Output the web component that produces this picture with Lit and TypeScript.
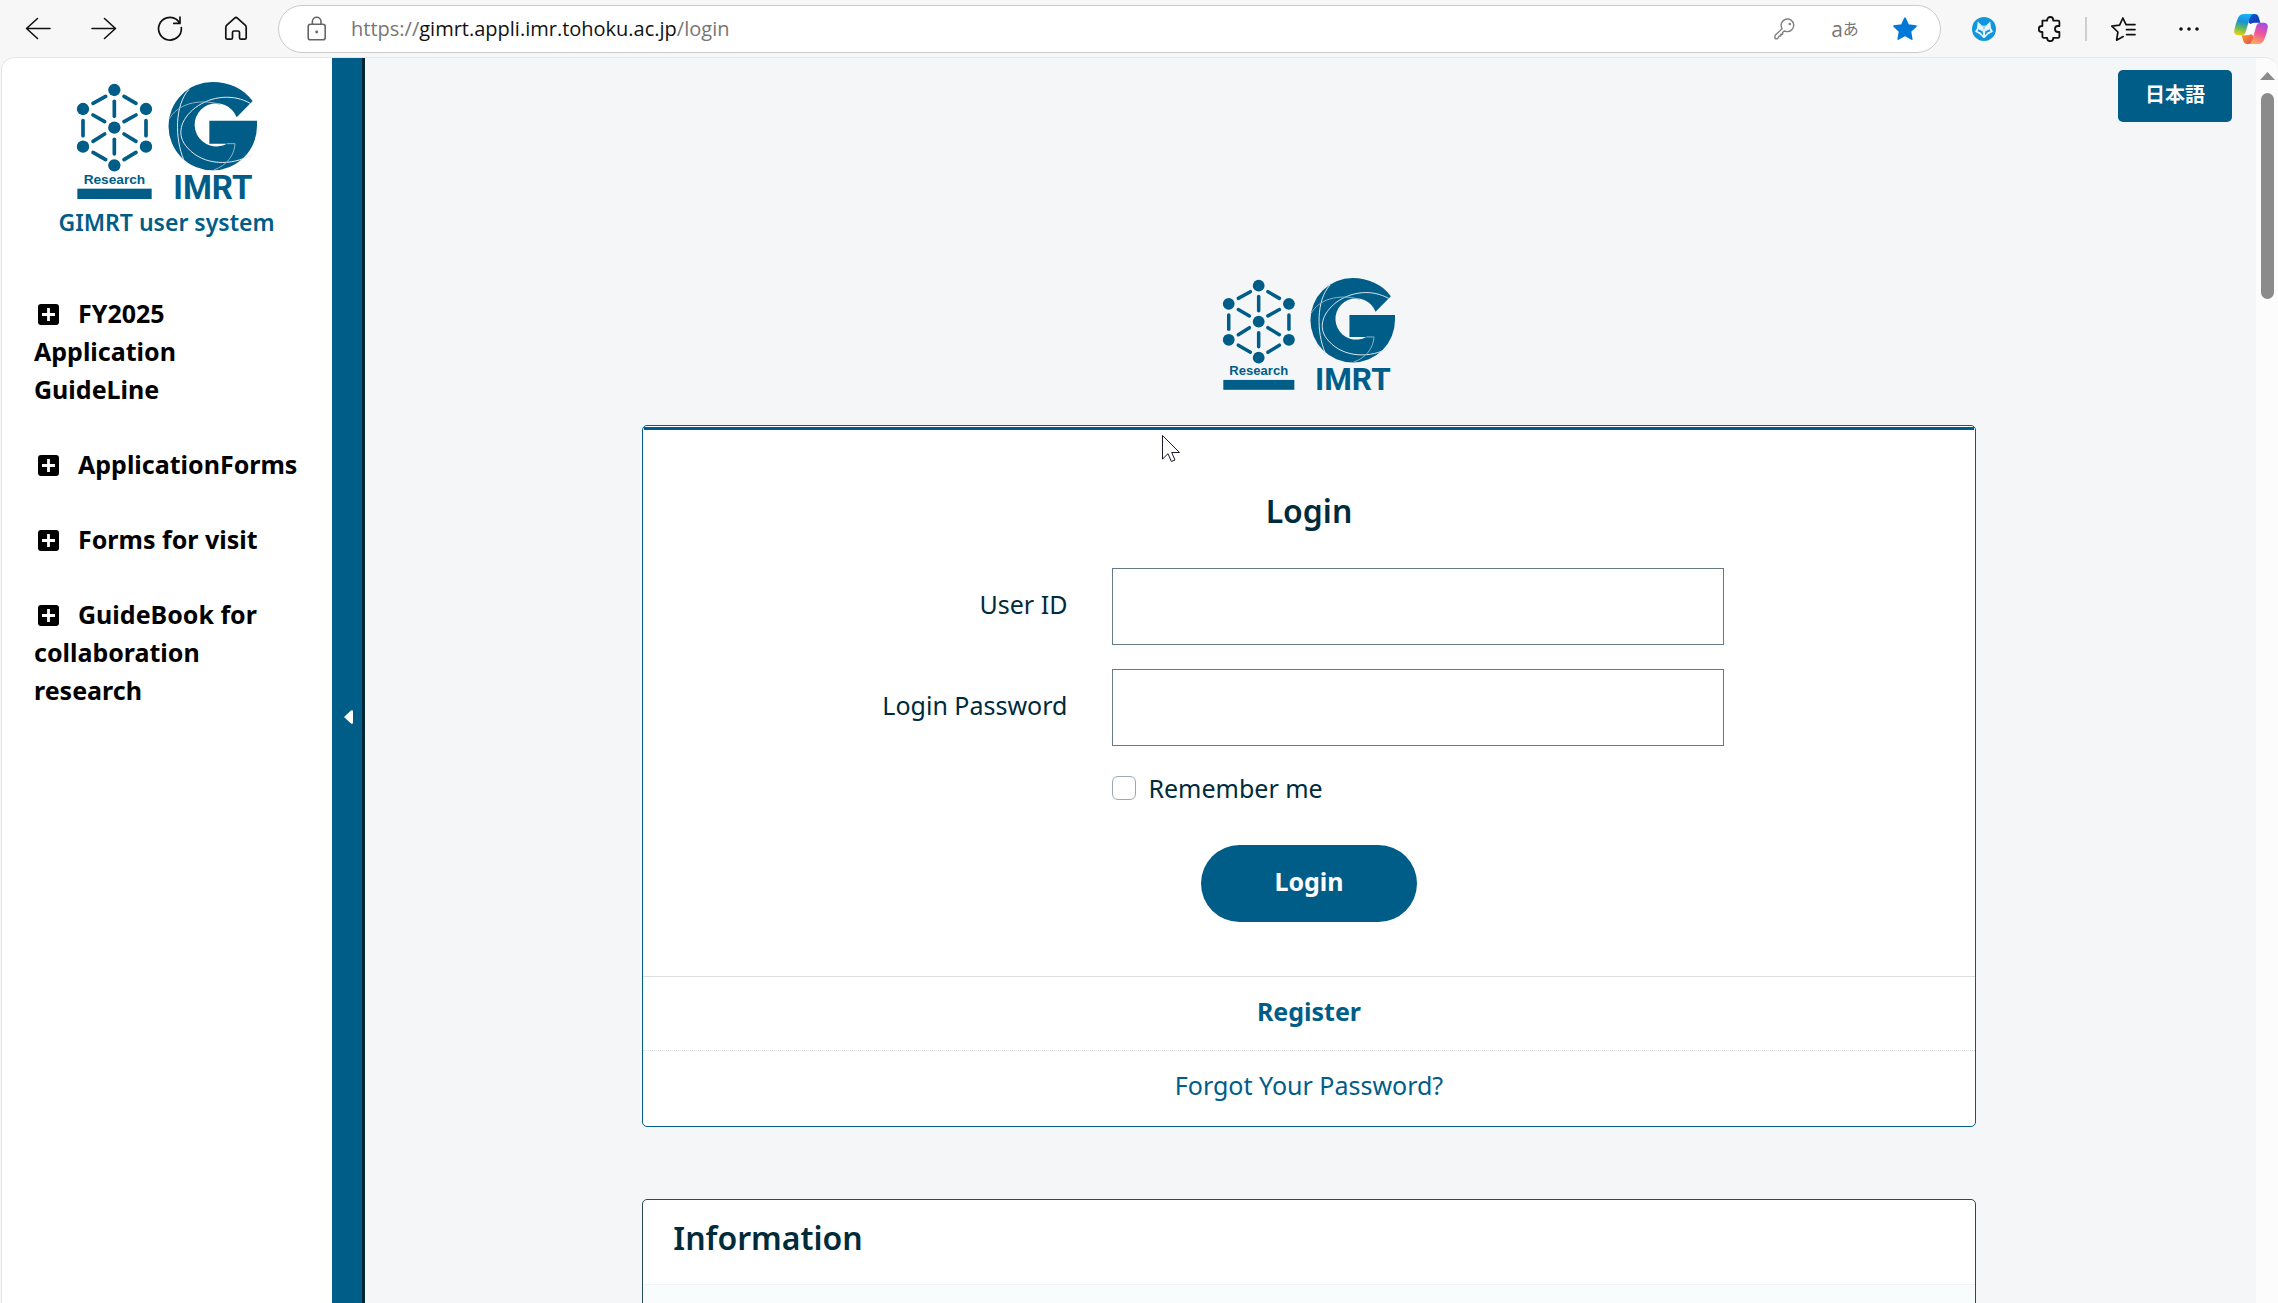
import { LitElement, html, css, svg } from "lit";
import { customElement, state } from "lit/decorators.js";

const NODES = [
  [112, 24],
  [18, 81],
  [207, 81],
  [112, 137],
  [18, 194],
  [207, 194],
  [112, 250],
];

const LINKS = [
  [48, 64, 86, 43],
  [141, 43, 177, 64],
  [112, 58, 112, 103],
  [48, 99, 83, 119],
  [141, 119, 177, 99],
  [18, 116, 18, 161],
  [207, 116, 207, 161],
  [48, 178, 83, 156],
  [141, 156, 177, 178],
  [112, 172, 112, 216],
  [48, 211, 86, 233],
  [141, 233, 177, 211],
];

@customElement("gimrt-logo")
export class GimrtLogo extends LitElement {
  static styles = css`
    :host {
      display: block;
    }
    .logo {
      display: block;
      width: 100%;
      height: auto;
      fill: #005d88;
      overflow: visible;
    }
    .link {
      stroke: #005d88;
      stroke-width: 11;
      stroke-linecap: round;
    }
    .orbit {
      fill: none;
      stroke: #e3ebef;
      stroke-width: 3;
    }
    .faint {
      stroke: #8db3c8;
    }
    .small {
      font: 700 41px "Liberation Sans", Arial, sans-serif;
    }
    .large {
      font: 700 99px Roboto, sans-serif;
    }
  `;

  render() {
    return html`
      <svg class="logo" viewBox="0 0 540 351" role="img" aria-label="GIMRT">
        ${LINKS.map(
          ([a, b, c, d]) =>
            svg`<line class="link" x1=${a} y1=${b} x2=${c} y2=${d}></line>`
        )}
        ${NODES.map(
          ([x, y]) => svg`<circle cx=${x} cy=${y} r="18.5"></circle>`
        )}
        <text class="small" x="20" y="306">Research</text>
        <rect x="1" y="320" width="223" height="31"></rect>
        <path
          d="M527 57C500 20 455 0 407 0A132.500 132.500 0 0 0 407 265A133 133 0 0 0 540 132V116H397V185H450A65 65 0 1 1 479 106Z"
        ></path>
        <path
          class="orbit"
          d="M520 64C470 36 405 40 355 77C310 112 296 160 332 198C380 252 465 252 524 218"
        ></path>
        <path class="orbit" d="M336 22C292 70 294 170 320 233"></path>
        <path
          class="orbit faint"
          d="M276 112C300 68 360 48 430 67M450 185H474C472 220 450 250 410 264"
        ></path>
        <text class="large" x="289" y="351">IMRT</text>
      </svg>
    `;
  }
}

@customElement("app-root")
export class AppRoot extends LitElement {
  static styles = css`
    :host {
      display: block;
      font: 400 25px/36px "Noto Sans", "Noto Sans CJK JP", sans-serif;
      color: #002b3b;
    }
    *,
    *::before,
    *::after {
      box-sizing: border-box;
    }
    button {
      font: inherit;
      border: 0;
      padding: 0;
      margin: 0;
      background: none;
      color: inherit;
      cursor: pointer;
    }
    a {
      color: inherit;
      text-decoration: none;
    }
    svg {
      display: block;
      fill: none;
    }

    .window {
      display: flex;
      flex-direction: column;
      height: 100vh;
      overflow: hidden;
      background: #f7f7f7;
    }
    .toolbar {
      display: flex;
      align-items: center;
      flex: none;
      height: 57px;
      padding-left: 5px;
      color: #111;
    }
    .tool {
      display: flex;
      align-items: center;
      justify-content: center;
      width: 66px;
      height: 48px;
    }
    .tool-end {
      width: 56px;
      padding-left: 2px;
    }
    .separator {
      width: 2px;
      height: 24px;
      margin: 0 3px 0 2px;
      background: #cfcfcf;
    }
    .address {
      display: flex;
      align-items: center;
      flex: 1;
      height: 48px;
      margin: 0 10px 0 9px;
      padding: 0 5px 0 28px;
      border: 1px solid #cbcbcb;
      border-radius: 24px;
      background: #fff;
      color: #767676;
    }
    .url {
      flex: 1;
      padding-left: 24px;
      font: 400 20px/28px "Open Sans", sans-serif;
    }
    .host {
      color: #111;
    }
    .tool-narrow {
      width: 60px;
    }
    .translate {
      font: 400 21px/28px "Open Sans", "Noto Sans CJK JP", sans-serif;
    }
    .translate-kana {
      font-size: 16px;
    }

    .page {
      display: flex;
      flex: 1;
      min-height: 0;
      margin-left: 1px;
      border: 1px solid #e6e6e6;
      border-width: 1px 0 0 1px;
      border-radius: 14px 14px 0 0;
      overflow: hidden;
      background: #f4f6f8;
    }
    .sidebar {
      flex: none;
      width: 330px;
      padding: 24px 30px 0 32px;
      background: #fff;
    }
    .brand {
      display: flex;
      flex-direction: column;
      align-items: center;
      gap: 6px;
      padding-right: 3px;
      color: #005d88;
      font-size: 23px;
      line-height: 34px;
      font-weight: 600;
      white-space: nowrap;
    }
    .brand-logo {
      width: 180px;
    }
    .menu {
      display: flex;
      flex-direction: column;
      gap: 37px;
      margin: 55px 0 0;
      padding: 0;
      list-style: none;
      color: #000;
      font-weight: 700;
      line-height: 38px;
    }
    .plus {
      display: inline-block;
      margin: 0 19px 0 4px;
      vertical-align: -2px;
    }
    .divider {
      display: flex;
      align-items: center;
      justify-content: center;
      flex: none;
      z-index: 1;
      width: 33px;
      margin-right: -3px;
      padding: 72px 0 0 2px;
      border-right: 3px solid #002536;
      background: #005d88;
    }
    .main {
      flex: 1;
      min-width: 0;
      display: flex;
      flex-direction: column;
      align-items: center;
    }
    .top {
      display: flex;
      justify-content: flex-end;
      width: 100%;
      padding: 12px 24px 0;
    }
    .language {
      height: 52px;
      padding: 0 27px 5px;
      border-radius: 5px;
      background: #005d88;
      color: #fff;
      font: 700 20px/30px "Noto Sans CJK JP", sans-serif;
    }
    .main-logo {
      flex: none;
      width: 172px;
      margin: 156px 0 35px;
    }
    .card {
      flex: none;
      width: 70.4%;
      border: 1px solid #005d88;
      border-radius: 5px;
      background: #fff;
    }
    .login {
      padding: 1px 0 2px;
    }
    .form {
      display: flex;
      flex-direction: column;
      align-items: center;
      margin: 0 1px;
      padding: 57px 0 54px;
      border-top: 3px solid #005d88;
    }
    .title {
      margin: 0;
      font-size: 32px;
      line-height: 48px;
      font-weight: 600;
    }
    .fields {
      display: grid;
      grid-template-columns: 424fr 613fr 205fr;
      gap: 24px 45px;
      width: 100%;
      margin: 33px 0 39px;
    }
    .label {
      grid-column: 1;
      align-self: center;
      padding-bottom: 4px;
      text-align: right;
    }
    .input {
      grid-column: 2;
      width: 100%;
      height: 77px;
      padding: 0 18px;
      border: 1px solid #647b86;
      border-radius: 0;
      background: #fff;
      color: inherit;
      font: inherit;
    }
    .remember {
      grid-column: 2;
      display: flex;
      align-items: center;
      gap: 12px;
    }
    .check {
      appearance: none;
      width: 24px;
      height: 24px;
      margin: 0;
      border: 1px solid #99aab2;
      border-radius: 6px;
      background: #fff;
    }
    .check:checked {
      background: #005d88;
    }
    .submit {
      height: 77px;
      padding: 0 73px 4px;
      border-radius: 39px;
      background: #005d88;
      color: #fff;
      font-weight: 700;
    }
    .foot {
      padding: 16px 0 21px;
      border-top: 1px solid #dcdfe0;
      color: #005d88;
      text-align: center;
    }
    .foot-dotted {
      border-top-style: dotted;
    }
    .strong {
      font-weight: 700;
    }
    .info {
      margin-top: 72px;
      border-color: #2b4a57;
      overflow: hidden;
    }
    .info-head {
      padding: 14px 30px 22px;
    }
    .info-body {
      height: 240px;
      border-top: 1px solid #f0f4f5;
      background: #f8fcfd;
    }

    .scrollbar {
      display: flex;
      flex-direction: column;
      align-items: center;
      flex: none;
      gap: 13px;
      width: 22px;
      padding: 14px 0 0 1px;
      background: #fcfcfc;
    }
    .thumb {
      width: 13px;
      height: 16.7%;
      border-radius: 7px;
      background: #8b8b8b;
    }
    .pointer {
      position: absolute;
      left: 1161px;
      top: 434px;
      z-index: 2;
      pointer-events: none;
    }
  `;

  @state() private menuOpen = true;

  private items = [
    "FY2025 Application GuideLine",
    "ApplicationForms",
    "Forms for visit",
    "GuideBook for collaboration research",
  ];

  private toolbar() {
    return html`
      <header class="toolbar">
        <button class="tool" aria-label="Back">
          <svg width="26" height="24" viewBox="0 0 26 24" stroke="currentColor" stroke-width="1.6" stroke-linecap="round" stroke-linejoin="round">
            <path d="M25 11.5H1.5M12.5 1.5L1.5 11.5L12.5 21.5" />
          </svg>
        </button>
        <button class="tool" aria-label="Forward">
          <svg width="26" height="24" viewBox="0 0 26 24" stroke="currentColor" stroke-width="1.6" stroke-linecap="round" stroke-linejoin="round">
            <path d="M1 11.5H24.5M13.5 1.5L24.5 11.5L13.5 21.5" />
          </svg>
        </button>
        <button class="tool" aria-label="Refresh">
          <svg width="26" height="26" viewBox="0 0 26 26" stroke="currentColor" stroke-width="1.7" stroke-linecap="round" stroke-linejoin="round">
            <path d="M24.3 11.6A11.4 11.4 0 1 1 19.5 3.4L23 7.2M23 1.2V7.4H16.8" />
          </svg>
        </button>
        <button class="tool" aria-label="Home">
          <svg width="24" height="26" viewBox="0 0 24 26" stroke="currentColor" stroke-width="1.7" stroke-linejoin="round">
            <path d="M1.8 11.5Q1.8 10 2.8 9.1L10.6 2.1Q12 .9 13.4 2.1L21.2 9.1Q22.2 10 22.2 11.5V21.7Q22.2 23.2 20.7 23.2H17Q15.5 23.2 15.5 21.7V16.5Q15.5 15 14 15H10Q8.5 15 8.5 16.5V21.7Q8.5 23.2 7 23.2H3.3Q1.8 23.2 1.8 21.7Z" />
          </svg>
        </button>
        <div class="address">
          <svg width="20" height="26" viewBox="0 0 20 26" stroke="#666" stroke-width="1.6">
            <rect x="1.2" y="8.2" width="17" height="15.6" rx="2.4" />
            <path d="M5.4 8V5.5a4.3 4.3 0 0 1 8.6 0V8" />
            <circle cx="9.7" cy="16" r="1.4" fill="#666" stroke="none" />
          </svg>
          <span class="url">https://<span class="host">gimrt.appli.imr.tohoku.ac.jp</span>/login</span>
          <button class="tool tool-narrow" aria-label="Passwords">
            <svg width="22" height="22" viewBox="0 0 22 22" stroke="#808080" stroke-width="1.4" stroke-linejoin="round">
              <path d="M8.1 10.6A6.3 6.3 0 1 1 12 13.4Q10.8 13.3 10.2 13L8.6 14.6V16.3H6.8V18H5.2L3.9 20.2Q3.5 20.8 2.7 20.8H1.8Q1 20.8 1 20V18.3Q1 17.6 1.5 17.1Z" />
              <circle cx="15.8" cy="6" r="1.3" fill="#808080" stroke="none" />
            </svg>
          </button>
          <button class="tool tool-narrow translate" aria-label="Translate">a<span class="translate-kana">あ</span></button>
          <button class="tool tool-narrow" aria-label="Favorite">
            <svg width="26" height="26" viewBox="0 0 26 26">
              <path fill="#0078d7" stroke="#0078d7" stroke-width="1.6" stroke-linejoin="round" d="M13 2.2L16.3 9.1L24 10.1L18.4 15.5L19.8 23.1L13 19.4L6.2 23.1L7.6 15.5L2 10.1L9.7 9.1Z" />
            </svg>
          </button>
        </div>
        <button class="tool" aria-label="Fox extension">
          <svg width="24" height="24" viewBox="0 0 24 24">
            <circle cx="12" cy="12" r="12" fill="#1296db" />
            <path fill="#e6f4fc" d="M5.700 4.500L10 8.800H14L18.300 4.500L19 11L21 14.800L16.600 17L12.600 21H11.400L7.400 17L3 14.800L5 11Z" />
            <path fill="#1296db" d="M6.500 12.200L10.800 14.600L11 18.600L8.600 15.600L5.600 14.200ZM17.500 12.200L13.200 14.600L13 18.600L15.400 15.600L18.400 14.200Z" />
            <path fill="#a9daf4" d="M10 8.800H14L12 14Z" />
          </svg>
        </button>
        <button class="tool" aria-label="Extensions">
          <svg width="24" height="26" viewBox="0 0 24 26" stroke="currentColor" stroke-width="1.8" stroke-linejoin="round">
            <path d="M4.4 4.600H9.200V4A3 3 0 0 1 15.200 4V4.600H20Q21.400 4.600 21.400 6V10H20A3 3 0 0 0 20 16H21.400V20.400Q21.400 21.800 20 21.800H15.200V22.200A3 3 0 0 1 9.200 22.200V21.800H5.800Q4.400 21.800 4.400 20.400V16H3.800A3 3 0 0 1 3.800 10H4.400Z" />
          </svg>
        </button>
        <span class="separator"></span>
        <button class="tool" aria-label="Favorites list">
          <svg width="26" height="26" viewBox="0 0 26 26" stroke="currentColor" stroke-width="1.7" stroke-linecap="round" stroke-linejoin="round">
            <path d="M13.200 20.600L6.600 24.200L7.900 16L1.800 10.200L9.600 9.100L12.900 2L16 8.600H25M16.500 13.600H25M16.500 18.600H25" />
          </svg>
        </button>
        <button class="tool" aria-label="More">
          <svg width="20" height="6" viewBox="0 0 20 6">
            <circle cx="2" cy="3" r="1.8" fill="currentColor" />
            <circle cx="10" cy="3" r="1.8" fill="currentColor" />
            <circle cx="18" cy="3" r="1.8" fill="currentColor" />
          </svg>
        </button>
        <button class="tool tool-end" aria-label="Copilot">
          <svg width="34" height="30" viewBox="0 0 102 90">
            <defs>
              <linearGradient id="cool" x1="0.5" y1="0" x2="0.3" y2="1">
                <stop offset="0" stop-color="#18b1f5" />
                <stop offset="0.35" stop-color="#1a8fdc" />
                <stop offset="0.65" stop-color="#5cba62" />
                <stop offset="1" stop-color="#f3d00f" />
              </linearGradient>
              <linearGradient id="warm" x1="0.7" y1="0" x2="0.4" y2="1">
                <stop offset="0" stop-color="#a04be8" />
                <stop offset="0.5" stop-color="#f0559b" />
                <stop offset="1" stop-color="#ffa95c" />
              </linearGradient>
              <linearGradient id="fold" x1="0" y1="0" x2="1" y2="1">
                <stop offset="0" stop-color="#0b5bd0" />
                <stop offset="1" stop-color="#1437b4" />
              </linearGradient>
              <linearGradient id="ember" x1="0" y1="0" x2="1" y2="1">
                <stop offset="0" stop-color="#f7a72c" />
                <stop offset="1" stop-color="#e8414e" />
              </linearGradient>
            </defs>
            <path fill="#fff" d="M44 28H62L56 62H38Z" />
            <path fill="url(#fold)" d="M46 0H62Q71 0 74 9L79 26H64Q55 26 50 30L44 26Z" />
            <path fill="url(#ember)" d="M56 90H40Q31 90 28 81L23 64H38Q47 64 52 60L58 66Z" />
            <path fill="url(#cool)" d="M30 0H58Q50 3 47 13L35 54Q32 64 22 64H14Q-2 64 1 48Q4 30 12 12Q17 0 30 0Z" />
            <path fill="url(#warm)" d="M72 90H44Q52 87 55 77L67 36Q70 26 80 26H88Q104 26 101 42Q98 60 90 78Q85 90 72 90Z" />
          </svg>
        </button>
      </header>
    `;
  }

  private sidebar() {
    return html`
      <aside class="sidebar" ?hidden=${!this.menuOpen}>
        <a class="brand" href="#">
          <gimrt-logo class="brand-logo"></gimrt-logo>
          <span>GIMRT user system</span>
        </a>
        <ul class="menu">
          ${this.items.map(
            (item) => html`<li>
              <a href="#"><svg class="plus" width="21" height="21" viewBox="0 0 21 21"><rect width="21" height="21" rx="3" fill="#000" /><path d="M10.5 4V17M4 10.5H17" stroke="#fff" stroke-width="2.8" /></svg>${item}</a>
            </li>`
          )}
        </ul>
      </aside>
    `;
  }

  render() {
    return html`
      <div class="window">
        ${this.toolbar()}
        <div class="page">
          ${this.sidebar()}
          <button class="divider" aria-label="Toggle menu" @click=${() => (this.menuOpen = !this.menuOpen)}>
            <svg width="9" height="14" viewBox="0 0 9 14"><path d="M0 7L7 .5Q9 -.5 9 1.5V12.5Q9 14.5 7 13.5Z" fill="#fff" /></svg>
          </button>
          <main class="main">
            <div class="top">
              <button class="language">日本語</button>
            </div>
            <gimrt-logo class="main-logo"></gimrt-logo>
            <section class="card login">
              <form class="form" @submit=${(e: Event) => e.preventDefault()}>
                <h1 class="title">Login</h1>
                <div class="fields">
                  <label class="label" for="user">User ID</label>
                  <input class="input" id="user" type="text" />
                  <label class="label" for="password">Login Password</label>
                  <input class="input" id="password" type="password" />
                  <div class="remember">
                    <input class="check" id="remember" type="checkbox" />
                    <label for="remember">Remember me</label>
                  </div>
                </div>
                <button class="submit" type="submit">Login</button>
              </form>
              <div class="foot"><a class="strong" href="#">Register</a></div>
              <div class="foot foot-dotted"><a href="#">Forgot Your Password?</a></div>
            </section>
            <section class="card info">
              <div class="info-head"><h2 class="title">Information</h2></div>
              <div class="info-body"></div>
            </section>
          </main>
          <div class="scrollbar">
            <svg width="15" height="8" viewBox="0 0 15 8"><path d="M7.5 0L15 8H0Z" fill="#8b8b8b" /></svg>
            <div class="thumb"></div>
          </div>
        </div>
        <svg class="pointer" width="20" height="30" viewBox="0 0 20 30">
          <path d="M1.5 1.5V25L7 19.7L10.4 27.5L14 26L10.7 18.5H18.5Z" fill="#fff" stroke="#1a1a2a" stroke-width="1" />
        </svg>
      </div>
    `;
  }
}
